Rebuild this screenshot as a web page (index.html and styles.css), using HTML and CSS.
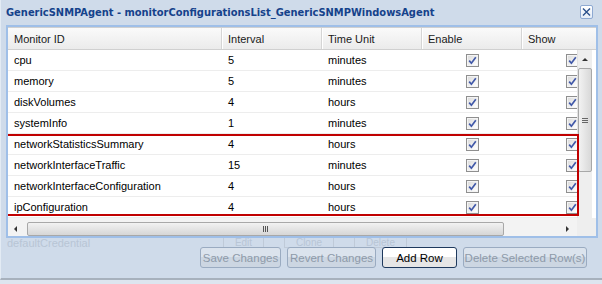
FILE: index.html
```html
<!DOCTYPE html>
<html lang="en">
  <head>
    <meta charset="UTF-8" />
    <meta name="viewport" content="width=device-width, initial-scale=1.0" />
    <title>monitorConfigurationsList</title>
    <link rel="stylesheet" href="styles.css">
  </head>
  <body>
    <svg class="defs" width="0" height="0">
      <defs>
        <linearGradient id="chkbg" x1="0" y1="0" x2="1" y2="1">
          <stop offset="0" stop-color="#dcdcdc" />
          <stop offset="1" stop-color="#ffffff" />
        </linearGradient>
        <symbol id="chk" viewBox="0 0 13 13">
          <rect x="0.5" y="0.5" width="12" height="12" fill="#f4f4f4" stroke="#8f8f8f" />
          <rect x="2" y="2" width="9" height="9" fill="url(#chkbg)" />
          <path d="M3.2 6.6 L5.4 9.2 L9.8 3.2" fill="none" stroke="#4058a8" stroke-width="1.7" />
        </symbol>
      </defs>
    </svg>

    <div class="window">
      <!-- Title bar -->
      <div class="titlebar">
        <span class="title">GenericSNMPAgent - monitorConfigurationsList_GenericSNMPWindowsAgent</span>
        <span class="close">
          <svg width="13" height="14" viewBox="0 0 13 14">
            <path d="M3 3.5 L10 10.5 M10 3.5 L3 10.5" stroke="#2a4f8a" stroke-width="1.4" />
          </svg>
        </span>
      </div>

      <!-- Grid -->
      <div class="grid">
        <div class="grid-header">
          <div class="hcell col-id">Monitor ID</div>
          <div class="hcell">Interval</div>
          <div class="hcell">Time Unit</div>
          <div class="hcell">Enable</div>
          <div class="hcell">Show</div>
        </div>

        <div class="grid-body">
          <div class="rows" id="rows"></div>

          <div class="vscroll">
            <span class="arrow-up"></span>
            <span class="vthumb"><span class="grip-h"></span></span>
          </div>

          <!-- marked rows -->
          <div class="highlight"></div>
        </div>

        <div class="hscroll">
          <div class="hbar">
            <span class="arrow-left"></span>
            <span class="hthumb"><span class="grip-v"></span></span>
            <span class="arrow-right"></span>
          </div>
          <div class="corner"></div>
        </div>
      </div>

      <!-- Buttons -->
      <div class="footer">
        <div class="ghost">
          <span class="ghost-name">defaultCredential</span>
          <span class="ghost-btn g1">Edit</span>
          <span class="ghost-btn g2">Clone</span>
          <span class="ghost-btn g3">Delete</span>
        </div>
        <div class="buttons">
          <button class="btn disabled w-save">Save Changes</button>
          <button class="btn disabled w-revert">Revert Changes</button>
          <button class="btn w-add">Add Row</button>
          <button class="btn disabled w-delete">Delete Selected Row(s)</button>
        </div>
      </div>
    </div>

    <script>
      // Data monitor
      var data = [
        ["cpu", 5, "minutes"],
        ["memory", 5, "minutes"],
        ["diskVolumes", 4, "hours"],
        ["systemInfo", 1, "minutes"],
        ["networkStatisticsSummary", 4, "hours"],
        ["networkInterfaceTraffic", 15, "minutes"],
        ["networkInterfaceConfiguration", 4, "hours"],
        ["ipConfiguration", 4, "hours"]
      ];

      var check = '<svg width="13" height="13"><use href="#chk"></use></svg>';
      var html = "";
      for (var i = 0; i < data.length; i++) {
        html += '<div class="row">' +
          '<div class="cell col-id">' + data[i][0] + '</div>' +
          '<div class="cell">' + data[i][1] + '</div>' +
          '<div class="cell">' + data[i][2] + '</div>' +
          '<div class="cell center">' + check + '</div>' +
          '<div class="cell center">' + check + '</div>' +
          '</div>';
      }
      document.getElementById("rows").innerHTML = html;
    </script>
  </body>
</html>
```

FILE: styles.css
```css
/* Halaman */
body {
  margin: 0;
  background-color: #dde5ef;
  font-family: "Liberation Sans", Arial, sans-serif;
  font-size: 11px;
}

.defs {
  position: absolute;
}

.window {
  width: 602px;
  height: 280px;
  background-color: #cfdbea;
  border-bottom: 2px solid #a7b1bd;
  box-sizing: border-box;
  border-left: 1px solid #e3ebf4;
}

/* Title bar */
.titlebar {
  height: 25px;
  display: flex;
  align-items: center;
  padding-left: 5px;
  box-sizing: border-box;
}

.title {
  font-family: "DejaVu Sans Condensed", "DejaVu Sans", Tahoma, sans-serif;
  font-stretch: condensed;
  font-weight: bold;
  font-size: 11px;
  color: #15428b;
  flex: 1;
  white-space: nowrap;
}

.close {
  width: 13px;
  height: 14px;
  margin-right: 9px;
  margin-top: -1px;
  border: 1px solid #8ea9d2;
  border-radius: 2px;
  background: linear-gradient(#ffffff, #e4ecf7);
  box-sizing: border-box;
  display: flex;
  align-items: center;
  justify-content: center;
}

.close svg {
  flex: none;
}

/* Grid */
.grid {
  width: 588px;
  margin-left: 5px;
  border: 2px solid #9fbfe8;
  background-color: #ffffff;
  overflow: hidden;
}

.grid-header {
  display: flex;
  height: 23px;
  background: linear-gradient(#fafafa, #ebebeb);
  border-top: 1px solid #d0d0d0;
  border-bottom: 1px solid #d0d0d0;
  box-sizing: border-box;
}

.hcell {
  flex: none;
  width: 100px;
  padding-left: 6px;
  box-sizing: border-box;
  display: flex;
  align-items: center;
  color: #1a1a1a;
  border-right: 1px solid #d5d5d5;
  box-shadow: 1px 0 0 #ffffff;
}

.col-id {
  width: 214px;
}

.grid-body {
  position: relative;
  display: flex;
  height: 168px;
}

.rows {
  width: 569px;
  overflow: hidden;
}

.row {
  display: flex;
  height: 21px;
  border-bottom: 1px solid #ededed;
  box-sizing: border-box;
}

.cell {
  flex: none;
  width: 100px;
  padding-left: 6px;
  box-sizing: border-box;
  display: flex;
  align-items: center;
  color: #000000;
}

.cell.col-id {
  width: 214px;
}

.cell.center {
  justify-content: center;
  padding-left: 0;
}

.cell svg {
  display: block;
}

/* Scrollbar vertikal */
.vscroll {
  width: 15px;
  background-color: #eeeeee;
  border-left: 1px solid #e2e2e2;
  box-sizing: border-box;
  display: flex;
  flex-direction: column;
  align-items: center;
}

.arrow-up {
  margin-top: 8px;
  width: 0;
  height: 0;
  border-left: 3px solid transparent;
  border-right: 3px solid transparent;
  border-bottom: 3px solid #333333;
}

.vthumb {
  margin-top: 7px;
  width: 14px;
  height: 104px;
  border: 1px solid #a8a8a8;
  border-radius: 2px;
  background: linear-gradient(90deg, #f2f2f2, #d8d8d8);
  box-sizing: border-box;
  display: flex;
  align-items: center;
  justify-content: center;
}

.grip-h {
  width: 6px;
  height: 5px;
  border-top: 1px solid #666666;
  border-bottom: 1px solid #666666;
  box-sizing: border-box;
  background: linear-gradient(transparent 1px, #666666 1px, #666666 2px, transparent 2px);
}

.highlight {
  position: absolute;
  left: -2px;
  top: 84px;
  width: 573px;
  height: 82px;
  border: 2px solid #c00000;
  box-sizing: border-box;
  pointer-events: none;
}

/* Scrollbar horizontal */
.hscroll {
  height: 18px;
  display: flex;
  background-color: #f3f3f3;
}

.hbar {
  width: 569px;
  margin-top: 3px;
  height: 15px;
  display: flex;
  align-items: center;
  position: relative;
}

.arrow-left {
  margin-left: 6px;
  width: 0;
  height: 0;
  border-top: 3px solid transparent;
  border-bottom: 3px solid transparent;
  border-right: 3px solid #333333;
}

.hthumb {
  margin-left: 10px;
  width: 477px;
  height: 14px;
  border: 1px solid #a8a8a8;
  border-radius: 2px;
  background: linear-gradient(#f2f2f2, #d6d6d6);
  box-sizing: border-box;
  display: flex;
  align-items: center;
  justify-content: center;
}

.grip-v {
  width: 5px;
  height: 6px;
  border-left: 1px solid #555555;
  border-right: 1px solid #555555;
  box-sizing: border-box;
  background: linear-gradient(90deg, transparent 1px, #555555 1px, #555555 2px, transparent 2px);
}

.arrow-right {
  margin-left: 62px;
  width: 0;
  height: 0;
  border-top: 3px solid transparent;
  border-bottom: 3px solid transparent;
  border-left: 3px solid #333333;
}

.corner {
  flex: 1;
  background-color: #eeeeee;
}

/* Tombol */
.footer {
  position: relative;
  height: 40px;
}

.ghost {
  position: absolute;
  left: 0;
  top: 0;
  width: 100%;
  height: 10px;
  color: #b8c5d5;
  font-size: 10px;
  line-height: 10px;
}

.ghost-name {
  position: absolute;
  left: 6px;
  top: 0;
  font-size: 11px;
  line-height: 10px;
}

.ghost-btn {
  position: absolute;
  top: 0;
  height: 9px;
  line-height: 9px;
  border: 1px solid #bfcad8;
  border-top: none;
  padding: 0 6px;
  text-align: center;
}

.g1 { left: 222px; width: 27px; }
.g2 { left: 283px; width: 36px; }
.g3 { left: 353px; width: 39px; }

.buttons {
  position: relative;
  display: flex;
  justify-content: flex-end;
  gap: 6px;
  padding-top: 9px;
  padding-right: 15px;
}

.btn {
  height: 21px;
  font-family: "Liberation Sans", Arial, sans-serif;
  font-size: 11.5px;
  white-space: nowrap;
  padding: 0;
  border: 1px solid #8fa3bc;
  border-radius: 3px;
  background: linear-gradient(#f6f8fa 50%, #e4e8ed 50%);
  color: #000000;
}

.btn.disabled {
  color: #8e9aa9;
  border-color: #9aabc1;
  background: linear-gradient(#dbe3ed 50%, #ccd6e2 50%);
}

.w-save { width: 81px; }
.w-revert { width: 89px; }
.w-add {
  width: 75px;
  border-color: #1f3a5e;
  background: linear-gradient(#ffffff 50%, #e6e6e6 50%);
}
.w-delete { width: 124px; }
```
